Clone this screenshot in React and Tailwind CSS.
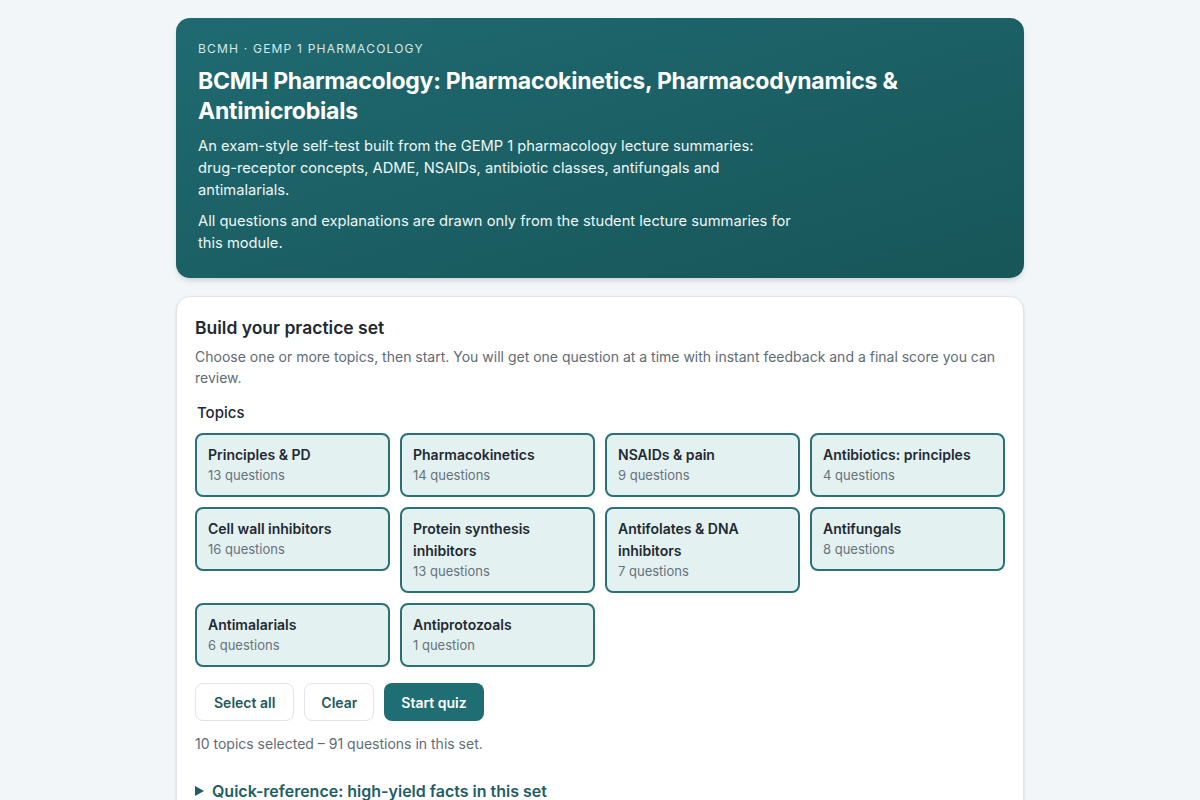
import React, { useState } from 'react';

const topics = [
  { name: 'Principles & PD', count: 13 },
  { name: 'Pharmacokinetics', count: 14 },
  { name: 'NSAIDs & pain', count: 9 },
  { name: 'Antibiotics: principles', count: 4 },
  { name: 'Cell wall inhibitors', count: 16 },
  { name: 'Protein synthesis inhibitors', count: 13 },
  { name: 'Antifolates & DNA inhibitors', count: 7 },
  { name: 'Antifungals', count: 8 },
  { name: 'Antimalarials', count: 6 },
  { name: 'Antiprotozoals', count: 1 },
];

const App = () => {
  const [selected, setSelected] = useState(topics.map((t) => t.name));

  const toggle = (name) => {
    setSelected((s) => (s.includes(name) ? s.filter((n) => n !== name) : [...s, name]));
  };

  const total = topics.filter((t) => selected.includes(t.name)).reduce((a, t) => a + t.count, 0);

  return (
    <div className="min-h-screen bg-[#f2f6f9] font-['Inter','Liberation_Sans',sans-serif] text-[#1f2933]">
      <div className="max-w-[848px] mx-auto pt-[18px] pb-10 flex flex-col gap-[18px]">
        {/* Header */}
        <header className="rounded-[14px] bg-gradient-to-br from-[#1f6a71] to-[#175659] text-white px-[22px] pt-[23px] pb-[24px] shadow-md">
          <div className="text-[12px] uppercase tracking-[0.1em] text-[#d5e9ea] leading-4">BCMH · GEMP 1 Pharmacology</div>
          <h1 className="mt-[9px] text-[23px] font-bold leading-[30px] tracking-[-0.01em]">
            BCMH Pharmacology: Pharmacokinetics, Pharmacodynamics &amp; Antimicrobials
          </h1>
          <p className="mt-[9px] max-w-[595px] text-[14.7px] leading-[22px] text-[#eef6f6]">
            An exam-style self-test built from the GEMP 1 pharmacology lecture summaries: drug-receptor concepts, ADME, NSAIDs, antibiotic classes, antifungals and antimalarials.
          </p>
          <p className="mt-[9px] max-w-[595px] text-[14.7px] leading-[22px] text-[#eef6f6]">
            All questions and explanations are drawn only from the student lecture summaries for this module.
          </p>
        </header>

        {/* Builder */}
        <section className="bg-white rounded-[14px] border border-[#dfe5ea] shadow-sm px-[18px] pt-[19px] pb-6">
          <h2 className="text-[17.5px] font-semibold leading-6 text-[#1f2933]">Build your practice set</h2>
          <p className="mt-[6px] text-[14px] leading-[21px] text-[#5f6b76]">
            Choose one or more topics, then start. You will get one question at a time with instant feedback and a final score you can review.
          </p>

          <div className="mt-[15px] pl-[2px] text-[15px] font-medium leading-5 text-[#1f2933]">Topics</div>

          <div className="mt-[10px] grid grid-cols-4 gap-[10px] items-start">
            {topics.map((t) => {
              const on = selected.includes(t.name);
              return (
                <button
                  key={t.name}
                  onClick={() => toggle(t.name)}
                  className={`text-left rounded-lg border-2 px-[11px] pt-[9px] pb-[11px] ${on ? 'border-[#2a7177] bg-[#e3f1f0]' : 'border-[#d5dde3] bg-white'}`}
                >
                  <div className="text-[14px] font-semibold leading-[22px] text-[#1f2933]">{t.name}</div>
                  <div className="text-[13px] leading-[18px] text-[#66727d]">
                    {t.count} {t.count === 1 ? 'question' : 'questions'}
                  </div>
                </button>
              );
            })}
          </div>

          <div className="mt-[16px] flex gap-[10px]">
            <button
              onClick={() => setSelected(topics.map((t) => t.name))}
              className="h-[38px] px-[18px] rounded-lg border border-[#dfe5ea] bg-white text-[14px] font-semibold text-[#1c5a60]"
            >
              Select all
            </button>
            <button
              onClick={() => setSelected([])}
              className="h-[38px] px-4 rounded-lg border border-[#dfe5ea] bg-white text-[14px] font-semibold text-[#1c5a60]"
            >
              Clear
            </button>
            <button className="h-[38px] px-[17px] rounded-lg bg-[#1f6e74] text-[14px] font-semibold text-white">
              Start quiz
            </button>
          </div>

          <p className="mt-[13px] text-[14px] leading-5 text-[#5f6b76]">
            {selected.length} topics selected – {total} questions in this set.
          </p>

          <details className="mt-[25px]">
            <summary className="list-none cursor-pointer flex items-center gap-[8px] text-[16px] font-semibold leading-6 text-[#1e5e64]">
              <svg width="9" height="10" viewBox="0 0 9 10" className="shrink-0">
                <path d="M0 0 L9 5 L0 10 Z" fill="#1e5e64" />
              </svg>
              Quick-reference: high-yield facts in this set
            </summary>
          </details>
        </section>
      </div>
    </div>
  );
};

export default App;
